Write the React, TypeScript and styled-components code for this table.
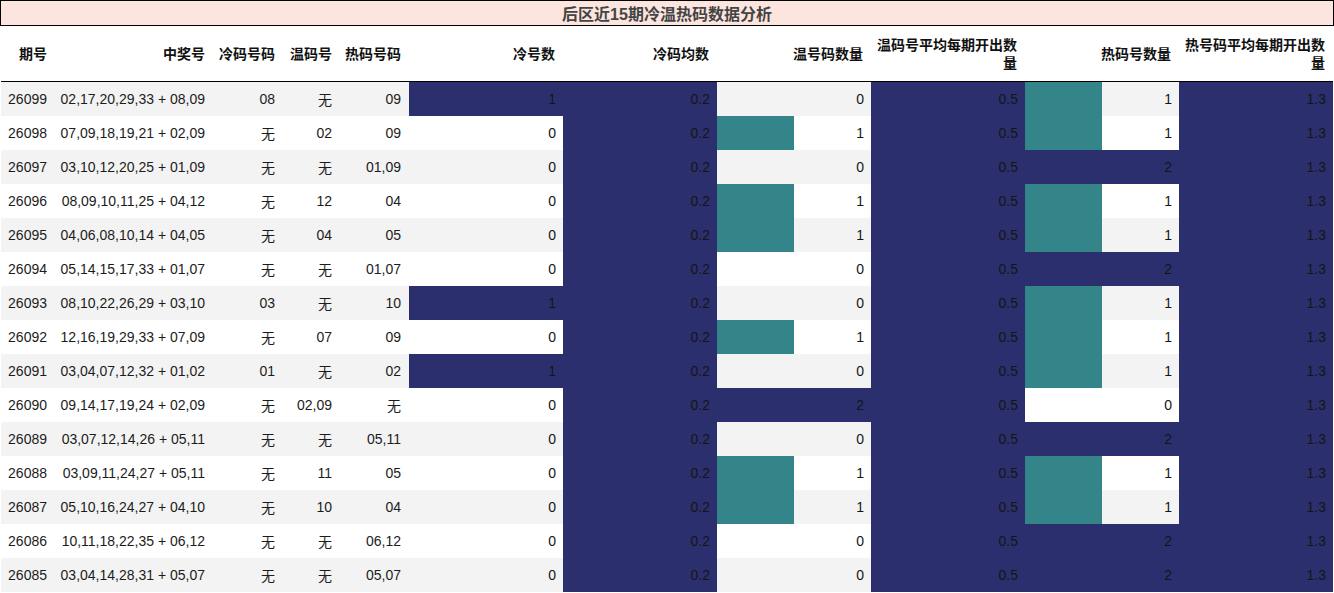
import React from "react";
import styled, { createGlobalStyle } from "styled-components";

const GlobalStyle = createGlobalStyle`
  html, body { margin: 0; padding: 0; background: #ffffff; }
  body { font-family: "Liberation Sans", "Noto Sans CJK SC", sans-serif; }
`;

const NAVY = "#2c2f6e";
const TEAL = "#33858a";
const COLS = "54px 158px 70px 57px 69px repeat(6, 154px)";

const Page = styled.div`
  width: 1334px;
  display: flex;
  flex-direction: column;
`;

const Title = styled.div`
  box-sizing: border-box;
  height: 26px;
  border: 1px solid #000;
  background: #fce5df;
  color: #444;
  font-weight: bold;
  font-size: 16px;
  display: flex;
  align-items: center;
  justify-content: center;
`;

const Table = styled.div`
  display: flex;
  flex-direction: column;
  margin: 0 1px;
`;

const HeaderRow = styled.div`
  display: grid;
  grid-template-columns: ${COLS};
  height: 55px;
  border-bottom: 1px solid #000;
  align-items: center;
`;

const HeadCell = styled.div`
  padding: 0 8px 0 1px;
  text-align: right;
  font-weight: bold;
  font-size: 14px;
  line-height: 18px;
  color: #111;
`;

const Row = styled.div<{ $alt: boolean }>`
  display: grid;
  grid-template-columns: ${COLS};
  height: 34px;
  background: ${(p) => (p.$alt ? "#f3f3f3" : "#ffffff")};
`;

const Cell = styled.div`
  display: flex;
  align-items: center;
  justify-content: flex-end;
  padding: 0 8px 0 1px;
  font-size: 14px;
  color: #1c1c1c;
  white-space: nowrap;
`;

const BarCell = styled(Cell)<{ $pct: number; $color: string }>`
  padding-right: 7px;
  color: #151515;
  background: linear-gradient(
    to right,
    ${(p) => p.$color} 0%,
    ${(p) => p.$color} ${(p) => p.$pct}%,
    transparent ${(p) => p.$pct}%,
    transparent 100%
  );
`;

type R = [string, string, string, string, string, number, number, number, number, number, number];

const data: R[] = [
  ["26099", "02,17,20,29,33 + 08,09", "08", "无", "09", 1, 0.2, 0, 0.5, 1, 1.3],
  ["26098", "07,09,18,19,21 + 02,09", "无", "02", "09", 0, 0.2, 1, 0.5, 1, 1.3],
  ["26097", "03,10,12,20,25 + 01,09", "无", "无", "01,09", 0, 0.2, 0, 0.5, 2, 1.3],
  ["26096", "08,09,10,11,25 + 04,12", "无", "12", "04", 0, 0.2, 1, 0.5, 1, 1.3],
  ["26095", "04,06,08,10,14 + 04,05", "无", "04", "05", 0, 0.2, 1, 0.5, 1, 1.3],
  ["26094", "05,14,15,17,33 + 01,07", "无", "无", "01,07", 0, 0.2, 0, 0.5, 2, 1.3],
  ["26093", "08,10,22,26,29 + 03,10", "03", "无", "10", 1, 0.2, 0, 0.5, 1, 1.3],
  ["26092", "12,16,19,29,33 + 07,09", "无", "07", "09", 0, 0.2, 1, 0.5, 1, 1.3],
  ["26091", "03,04,07,12,32 + 01,02", "01", "无", "02", 1, 0.2, 0, 0.5, 1, 1.3],
  ["26090", "09,14,17,19,24 + 02,09", "无", "02,09", "无", 0, 0.2, 2, 0.5, 0, 1.3],
  ["26089", "03,07,12,14,26 + 05,11", "无", "无", "05,11", 0, 0.2, 0, 0.5, 2, 1.3],
  ["26088", "03,09,11,24,27 + 05,11", "无", "11", "05", 0, 0.2, 1, 0.5, 1, 1.3],
  ["26087", "05,10,16,24,27 + 04,10", "无", "10", "04", 0, 0.2, 1, 0.5, 1, 1.3],
  ["26086", "10,11,18,22,35 + 06,12", "无", "无", "06,12", 0, 0.2, 0, 0.5, 2, 1.3],
  ["26085", "03,04,14,28,31 + 05,07", "无", "无", "05,07", 0, 0.2, 0, 0.5, 2, 1.3],
];

const headers = [
  "期号",
  "中奖号",
  "冷码号码",
  "温码号",
  "热码号码",
  "冷号数",
  "冷码均数",
  "温号码数量",
  "温码号平均每期开出数量",
  "热码号数量",
  "热号码平均每期开出数量",
];

const maxes = [5, 6, 7, 8, 9, 10].map((i) => Math.max(...data.map((r) => r[i] as number)));

export default function App() {
  return (
    <Page>
      <GlobalStyle />
      <Title>后区近15期冷温热码数据分析</Title>
      <Table>
        <HeaderRow>
          {headers.map((h) => (
            <HeadCell key={h}>{h}</HeadCell>
          ))}
        </HeaderRow>
        {data.map((r, ri) => (
          <Row key={r[0]} $alt={ri % 2 === 0}>
            {r.slice(0, 5).map((v, i) => (
              <Cell key={i}>{v}</Cell>
            ))}
            {r.slice(5).map((v, i) => {
              const pct = maxes[i] ? ((v as number) / maxes[i]) * 100 : 0;
              return (
                <BarCell key={i} $pct={pct} $color={pct >= 100 ? NAVY : TEAL}>
                  {String(v)}
                </BarCell>
              );
            })}
          </Row>
        ))}
      </Table>
    </Page>
  );
}
